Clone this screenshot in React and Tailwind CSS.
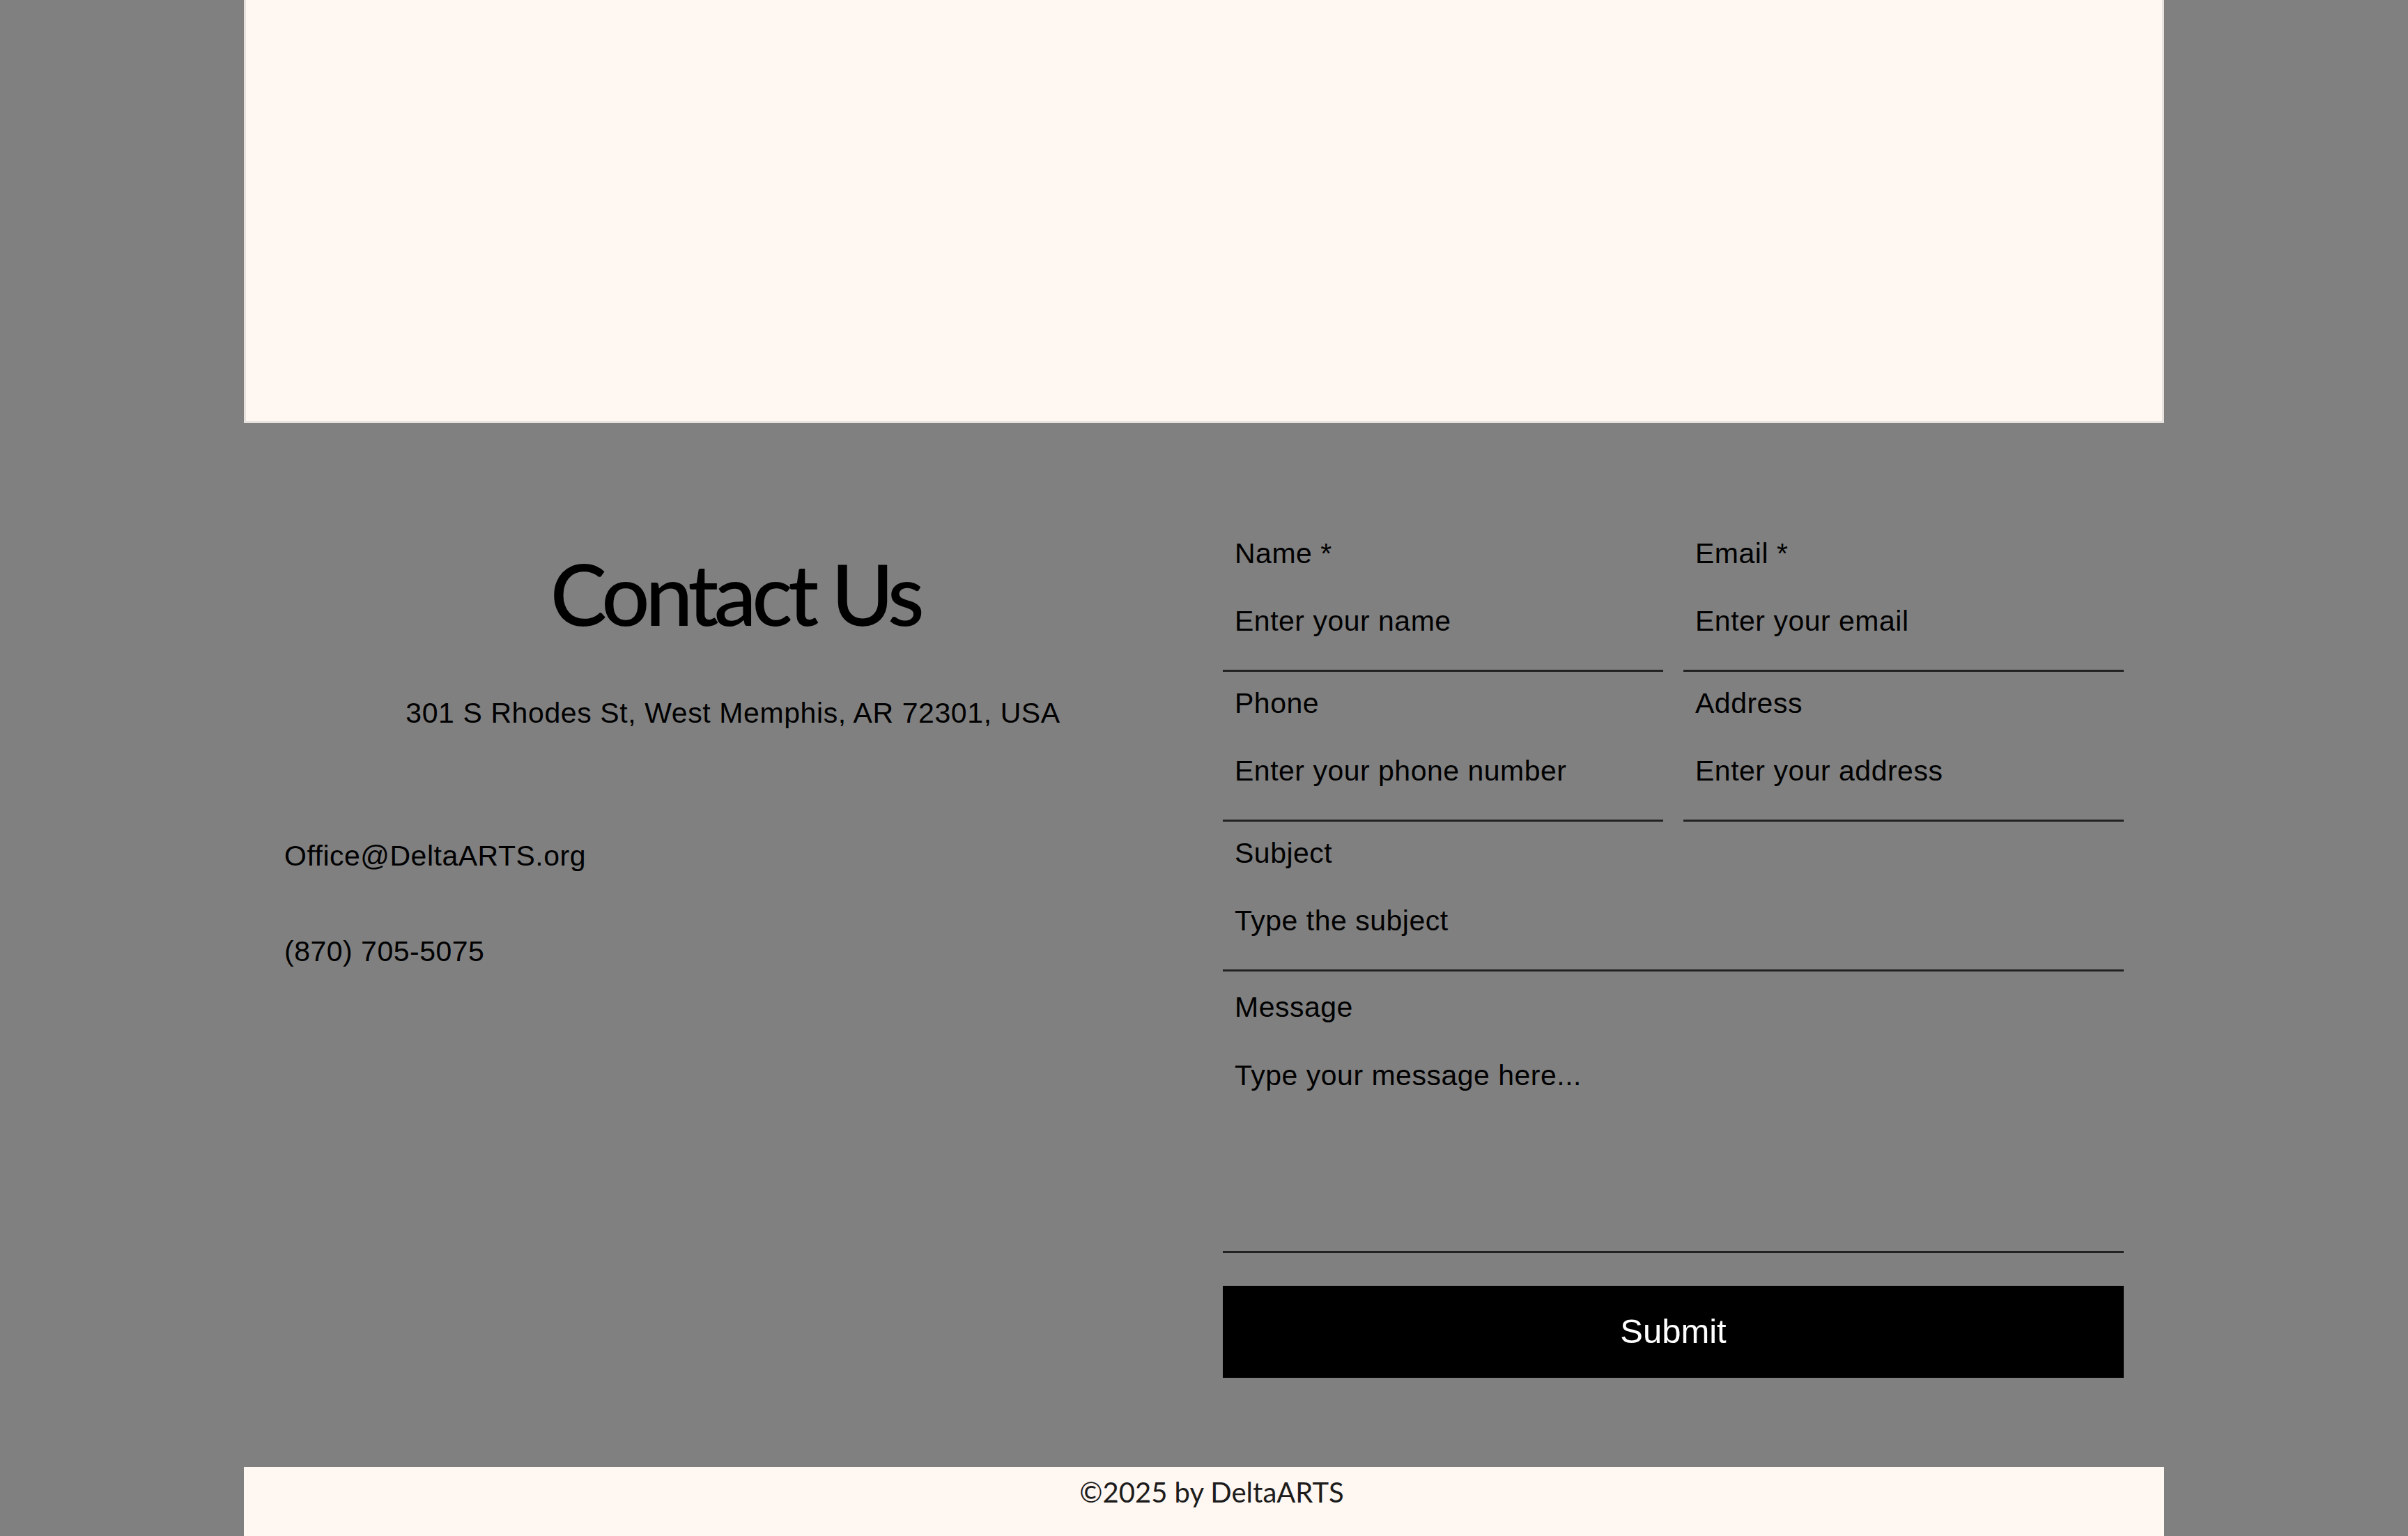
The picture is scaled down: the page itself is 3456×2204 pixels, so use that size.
import React from "react";

const sans = "font-['Liberation_Sans','Arial',sans-serif]";

function Field({ label, placeholder }) {
  return (
    <div className="flex flex-col pt-[17px]">
      <label className="h-[56px] pl-[17px] text-[41px] leading-[56px] tracking-[0.5px] text-black">{label}</label>
      <input
        type="text"
        placeholder={placeholder}
        className="h-[142px] w-full border-b-[3px] border-[#222] bg-transparent px-[17px] text-[41px] tracking-[0.5px] text-black outline-none placeholder:text-black"
      />
    </div>
  );
}

export default function App() {
  return (
    <div className={`min-h-screen w-full bg-[#808080] ${sans}`}>
      {/* top cream panel */}
      <div className="mx-auto h-[607px] w-[2756px] border-x-[3px] border-b-[3px] border-[#e7e2dd] bg-[#fff7f1]" />

      {/* contact section */}
      <section className="mx-auto grid w-[2756px] grid-cols-[1288px_1293px] gap-x-[59px] px-[58px] pt-[142px] pb-[128px]">
        <div className="flex flex-col">
          <h2 className="mt-[41px] pl-[6px] text-center font-['Lato','Liberation_Sans',sans-serif] text-[122px] leading-[122px] font-medium tracking-[-6.5px] text-black">
            Contact Us
          </h2>
          <p className="mt-[87px] text-center text-[41px] leading-[48px] tracking-[0.6px] text-black">
            301 S Rhodes St, West Memphis, AR 72301, USA
          </p>
          <p className="mt-[157px] text-[41px] leading-[48px] tracking-[0.5px] text-black">Office@DeltaARTS.org</p>
          <p className="mt-[89px] text-[41px] leading-[48px] tracking-[0.5px] text-black">(870) 705-5075</p>
        </div>

        <form className="flex flex-col" onSubmit={(e) => e.preventDefault()}>
          <div className="grid grid-cols-2 gap-x-[29px]">
            <Field label="Name *" placeholder="Enter your name" />
            <Field label="Email *" placeholder="Enter your email" />
            <Field label="Phone" placeholder="Enter your phone number" />
            <Field label="Address" placeholder="Enter your address" />
          </div>
          <Field label="Subject" placeholder="Type the subject" />
          <div className="flex flex-col pt-[23px]">
            <label className="h-[56px] pl-[17px] text-[41px] leading-[56px] tracking-[0.5px] text-black">Message</label>
            <textarea
              placeholder="Type your message here..."
              className="h-[325px] w-full resize-none border-b-[3px] border-[#222] bg-transparent px-[17px] pt-[46px] text-[41px] leading-[48px] tracking-[0.5px] text-black outline-none placeholder:text-black"
            />
          </div>
          <button
            type="submit"
            className="mt-[47px] flex h-[132px] w-full items-center justify-center bg-black text-[49px] text-white"
          >
            Submit
          </button>
        </form>
      </section>

      {/* footer */}
      <footer className="mx-auto h-[120px] w-[2756px] bg-[#fff7f1] pt-[12px] pl-[22px] text-center">
        <p className="font-['Lato',sans-serif] text-[40px] leading-[48px] text-[#1c1c1c]">©2025 by DeltaARTS</p>
      </footer>
    </div>
  );
}
